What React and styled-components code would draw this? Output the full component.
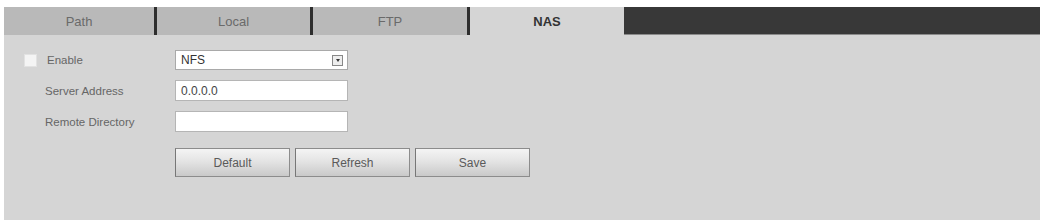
import styled, { createGlobalStyle } from "styled-components";

const Global = createGlobalStyle`
  body {
    margin: 0;
    background: #ffffff;
    font-family: "Liberation Sans", Arial, sans-serif;
  }
`;

const Panel = styled.div`
  margin: 7px 0 0 4px;
  width: 1036px;
  height: 213px;
  background: #d5d5d5;
  display: flex;
  flex-direction: column;
`;

const TabBar = styled.div`
  display: flex;
  height: 28px;
`;

const Tab = styled.div`
  box-sizing: border-box;
  width: ${(p) => p.$w || 155}px;
  display: flex;
  align-items: center;
  justify-content: center;
  font-size: 13px;
  background: ${(p) => (p.$active ? "#d5d5d5" : "#b9b9b9")};
  color: ${(p) => (p.$active ? "#333" : "#6a6a6a")};
  font-weight: ${(p) => (p.$active ? "bold" : "normal")};
  border-right: ${(p) => (p.$sep ? "3px solid #2e2e2e" : "none")};
`;

const TabFill = styled.div`
  flex: 1;
  background: #383838;
  border-bottom: 1px solid #8a8a8a;
`;

const Form = styled.div`
  display: grid;
  grid-template-columns: 151px 173px;
  row-gap: 10px;
  align-items: center;
  padding: 15px 0 0 20px;
`;

const Label = styled.label`
  display: flex;
  align-items: center;
  gap: 10px;
  font-size: 11.5px;
  color: #666;
  padding-left: ${(p) => (p.$indent ? "21px" : "0")};
`;

const Check = styled.span`
  width: 11px;
  height: 11px;
  background: #f4f4f4;
  border: 1px solid #e2e2e2;
`;

const Select = styled.div`
  box-sizing: border-box;
  height: 20px;
  background: #fff;
  border: 1px solid #a9a9a9;
  display: flex;
  align-items: center;
  justify-content: space-between;
  padding: 0 4px 0 5px;
  font-size: 12px;
  color: #333;
`;

const Arrow = styled.span`
  box-sizing: border-box;
  width: 11px;
  height: 11px;
  border: 1px solid #888;
  background: #eee;
  display: flex;
  align-items: center;
  justify-content: center;
  &::after {
    content: "";
    border-left: 2.5px solid transparent;
    border-right: 2.5px solid transparent;
    border-top: 3px solid #333;
  }
`;

const Input = styled.div`
  box-sizing: border-box;
  height: 21px;
  background: #fff;
  border: 1px solid #b5b5b5;
  display: flex;
  align-items: center;
  padding-left: 5px;
  font-size: 12px;
  color: #444;
`;

const Buttons = styled.div`
  display: flex;
  gap: 5px;
  margin: 16px 0 0 171px;
`;

const Button = styled.div`
  box-sizing: border-box;
  width: 115px;
  height: 29px;
  display: flex;
  align-items: center;
  justify-content: center;
  font-size: 12px;
  color: #5a5a5a;
  border: 1px solid #8c8c8c;
  border-left-color: #777;
  background: linear-gradient(#f4f4f4, #e4e4e4 45%, #c9c9c9);
`;

export default function App() {
  return (
    <>
      <Global />
      <Panel>
        <TabBar>
          <Tab $sep $w={153}>Path</Tab>
          <Tab $sep $w={156}>Local</Tab>
          <Tab $sep $w={157}>FTP</Tab>
          <Tab $active $w={154}>NAS</Tab>
          <TabFill />
        </TabBar>
        <Form>
          <Label>
            <Check />
            Enable
          </Label>
          <Select>
            NFS
            <Arrow />
          </Select>
          <Label $indent>Server Address</Label>
          <Input>0.0.0.0</Input>
          <Label $indent>Remote Directory</Label>
          <Input />
        </Form>
        <Buttons>
          <Button>Default</Button>
          <Button>Refresh</Button>
          <Button>Save</Button>
        </Buttons>
      </Panel>
    </>
  );
}
